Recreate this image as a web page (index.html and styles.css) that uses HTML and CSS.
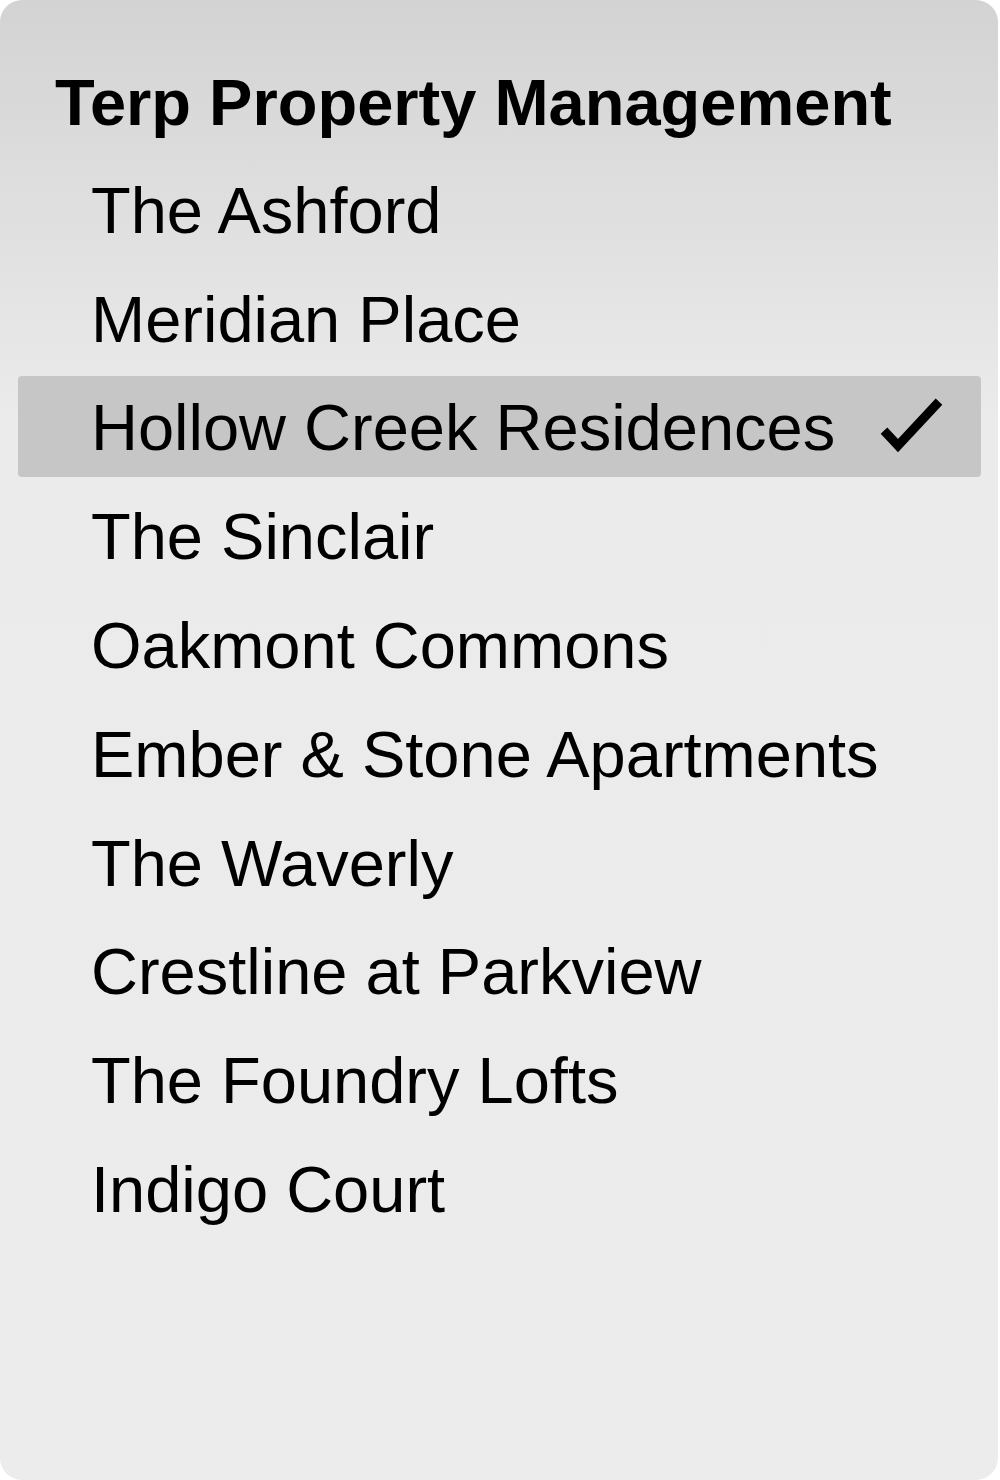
FILE: index.html
```html
<!DOCTYPE html>
<html lang="en">
<head>
<meta charset="utf-8">
<title>Terp Property Management</title>
<link rel="stylesheet" href="styles.css">
</head>
<body>
<div class="panel">
  <div class="title">Terp Property Management</div>
  <ul class="list">
    <li class="item"><span class="label">The Ashford</span></li>
    <li class="item"><span class="label">Meridian Place</span></li>
    <li class="item selected"><span class="label">Hollow Creek Residences</span>
      <svg class="check" width="64" height="56" viewBox="0 0 64 56"><polyline points="4,32.6 18,47.6 59,3.6" fill="none" stroke="#000" stroke-width="9" stroke-linejoin="miter"/></svg>
    </li>
    <li class="item"><span class="label">The Sinclair</span></li>
    <li class="item"><span class="label">Oakmont Commons</span></li>
    <li class="item"><span class="label">Ember &amp; Stone Apartments</span></li>
    <li class="item"><span class="label">The Waverly</span></li>
    <li class="item"><span class="label">Crestline at Parkview</span></li>
    <li class="item"><span class="label">The Foundry Lofts</span></li>
    <li class="item"><span class="label">Indigo Court</span></li>
  </ul>
</div>
</body>
</html>
```
FILE: styles.css
```css
html, body {
  margin: 0;
  padding: 0;
  background: #ffffff;
}
body {
  font-family: "Liberation Sans", Arial, sans-serif;
  color: #000;
}
.panel {
  width: 998px;
  height: 1480px;
  box-sizing: border-box;
  border-radius: 22px;
  background: linear-gradient(to bottom, #d3d3d3 0px, #ebebeb 420px, #ececec 1480px);
  padding: 66px 17px 0 18px;
}
.title {
  font-size: 65px;
  font-weight: bold;
  line-height: 74px;
  padding-left: 37px;
  margin-bottom: 18.4px;
}
.list {
  list-style: none;
  margin: 0;
  padding: 0;
  display: flex;
  flex-direction: column;
  gap: 8px;
}
.item {
  display: flex;
  align-items: center;
  justify-content: space-between;
  height: 100.8px;
  padding: 0 37px 0 73px;
  font-size: 65px;
  border-radius: 4px;
  white-space: nowrap;
}
.label {
  display: block;
  line-height: 97.4px;
  padding-top: 3.4px;
}
.item.selected {
  background: #c6c6c6;
}
.check {
  display: block;
  flex: none;
}
```
